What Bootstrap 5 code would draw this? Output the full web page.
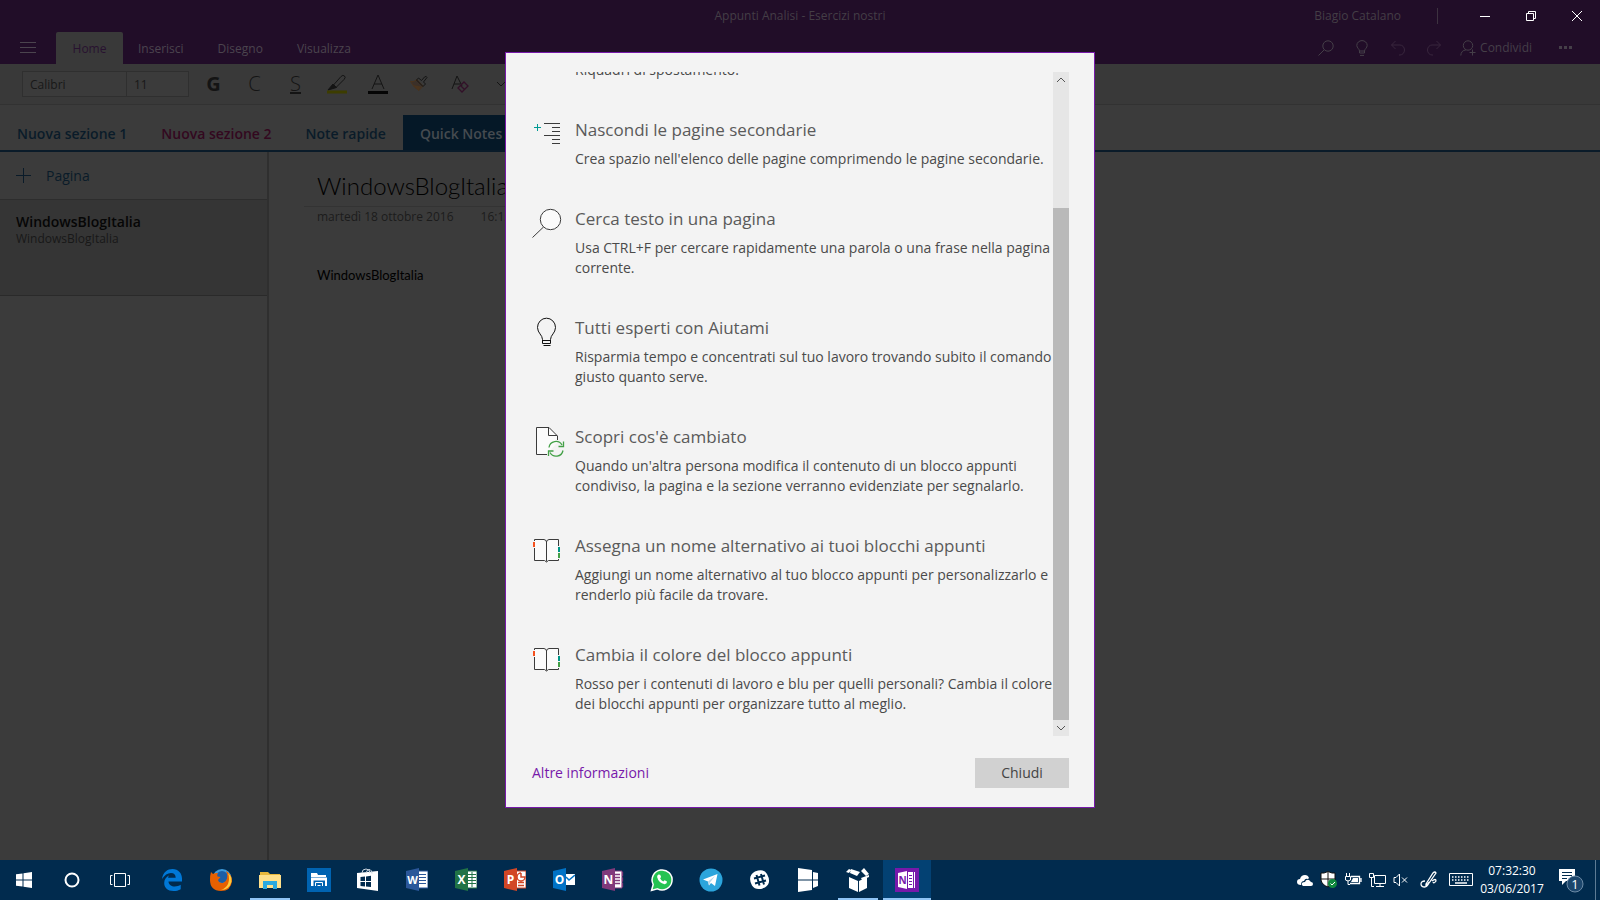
<!DOCTYPE html>
<html lang="it">
<head>
<meta charset="utf-8">
<meta name="viewport" content="width=device-width, initial-scale=1">
<title>Appunti Analisi - Esercizi nostri</title>
<link href="https://cdn.jsdelivr.net/npm/bootstrap@5.3.0/dist/css/bootstrap.min.css" rel="stylesheet">
<style>
  body { font-family: "Open Sans", "Noto Sans", sans-serif; font-size: 12px; line-height: 20px; background: #3b3b3b; color: #111; }
  button { font: inherit; color: inherit; background: none; border: 0; padding: 0; }
  a { text-decoration: none; }
  svg { display: block; flex: none; fill: none; stroke: currentColor; }

  /* Title bar and ribbon tabs */
  .titlebar { height: 32px; background: #210d28; color: #443e46; display: grid; grid-template-columns: 1fr auto 1fr; align-items: center; line-height: 22px; }
  .user-sep { width: 1px; height: 16px; background: #3d3240; margin: 0 24px 0 36px; }
  .win-btn { width: 46px; height: 32px; display: grid; place-items: center; color: #fff; }
  .tabbar { height: 32px; background: #210d28; color: #453f48; }
  .burger { width: 56px; height: 32px; display: grid; place-items: center; color: #4b444e; }
  .rtab { height: 32px; padding: 0 17px; color: #4b444e; line-height: 33px; }
  .rtab.active { width: 67px; padding: 0; text-align: center; background: #393939; color: #281230; border-radius: 2px 2px 0 0; margin-right: -2px; }
  .tool { width: 36px; height: 32px; display: grid; place-items: center; }
  .tool.off { color: #38263d; }
  .ribbon { height: 41px; background: #393939; border-bottom: 1px solid #323232; padding-left: 22px; color: #141414; }
  .fontbox { height: 26px; border: 1px solid #2f2f2f; background: #3b3b3b; color: #181818; font-size: 12px; padding: 0 7px; border-radius: 0; outline: 0; }
  .fontname { width: 105px; }
  .fontsize { width: 63px; margin-left: -1px; }
  .fmt { width: 41px; height: 32px; display: grid; place-items: center; }

  /* Sections */
  .sections { height: 47px; border-bottom: 2px solid #0a1b29; font-size: 14px; font-weight: 600; }
  .section-tab { height: 35px; line-height: 37px; padding: 0 17px; color: #0a1b29; white-space: nowrap; }
  .section-tab.pink { color: #33081f; }
  .section-tab.active { background: #051827; color: #454b50; }

  /* Pages */
  .pages { width: 269px; border-right: 2px solid #2f2f2f; }
  .add-page { height: 48px; padding-left: 16px; gap: 15px; color: #0a1b29; font-size: 14px; border-bottom: 1px solid #2d2d2d; }
  .page-item { height: 96px; padding: 13px 16px; background: #353535; border-bottom: 1px solid #2a2a2a; line-height: 17px; color: #181818; }
  .page-item strong { font-size: 14px; font-weight: 600; color: #060606; display: block; }
  .note { padding: 16px 0 0 35px; font-family: Lato, "Open Sans", sans-serif; color: #000; }
  .note h1 { font-size: 24px; font-weight: 300; line-height: 36px; margin: 0; padding: 0 0 2px 13px; border-bottom: 1px solid #333; }
  .note-date { font-family: "Open Sans", sans-serif; font-size: 12px; padding-left: 13px; color: #1c1c1c; gap: 27px; }
  .note-text { font-size: 13px; margin: 38px 0 0; padding-left: 13px; }

  /* Dialog */
  .veil { position: absolute; inset: 0; display: flex; align-items: center; justify-content: center; }
  .tips { width: 590px; height: 756px; background: #f3f3f3; border: 1px solid #7719aa; padding: 19px 25px 19px 26px; color: #4a4a4a; }
  .tips-view { height: 664px; overflow: hidden; }
  .tips-list { gap: 37px; padding-bottom: 22px; margin: 0; flex: 1; min-width: 0; }
  .tip { display: grid; grid-template-columns: 43px 1fr; }
  .tip h2 { font-size: 17px; font-weight: 400; line-height: 26px; margin: 0 0 6px; color: #5a5a5a; }
  .tip svg { margin-top: 1px; color: #3b3b3b; }
  .tip p { font-size: 14px; line-height: 20px; margin: 0; white-space: nowrap; }
  .sbar { width: 16px; background: #e6e6e6; display: grid; grid-template-rows: 16px 120px 1fr 16px; color: #555; }
  .sbar button { display: grid; place-items: center; }
  .sbar-thumb { background: #b9b9b9; grid-row: 3; }
  .sbar-down { grid-row: 4; }
  .tips-foot { margin-top: 22px; font-size: 14px; }
  .tips-foot a { color: #7719aa; line-height: 22px; }
  .close-btn { width: 94px; height: 30px; background: #d1d1d1; color: #444; }

  /* Taskbar */
  .taskbar { height: 40px; background: #012b4e; color: #fff; }
  .task { width: 48px; height: 40px; display: grid; place-items: center; border-top: 2px solid transparent; border-bottom: 2px solid transparent; }
  .task.app { margin-right: 1px; }
  .task.open { width: 40px; margin: 0 5px 0 4px; border-bottom-color: #8fc4f5; }
  .task.current { background: #034173; border-top-color: #034173; border-bottom-color: #8fc4f5; }
  .pinned { margin-left: 4px; }
  .tray-ico { width: 24px; height: 40px; display: grid; place-items: center; }
  .tray-ico.wide { width: 32px; }
  .clock { width: 70px; line-height: 18px; text-align: center; }
  .notif { width: 49px; height: 40px; display: grid; place-items: center; border-right: 1px solid #5d7b95; margin-right: 4px; }
</style>
</head>
<body>
<div class="d-flex flex-column vh-100 overflow-hidden">
  <div class="flex-grow-1 position-relative d-flex flex-column">
    <header>
      <div class="titlebar">
        <span></span>
        <span>Appunti Analisi - Esercizi nostri</span>
        <div class="d-flex align-items-center justify-content-end">
          <span>Biagio Catalano</span><span class="user-sep"></span>
          <button class="win-btn" aria-label="Riduci a icona"><svg width="12" height="12"><path d="M1 6.500H11"/></svg></button>
          <button class="win-btn" aria-label="Ripristina"><svg width="12" height="12"><path d="M1.500 3.500h7v7h-7zM3.500 3.500v-2h7v7h-2"/></svg></button>
          <button class="win-btn" aria-label="Chiudi finestra"><svg width="12" height="12"><path d="M1 1l10 10M11 1L1 11"/></svg></button>
        </div>
      </div>
      <div class="tabbar d-flex">
        <button class="burger" aria-label="Menu"><svg width="16" height="12"><path d="M0 .5h16M0 5.500h16M0 10.500h16"/></svg></button>
        <nav class="d-flex flex-grow-1">
          <a class="rtab active" href="#">Home</a><a class="rtab" href="#">Inserisci</a><a class="rtab" href="#">Disegno</a><a class="rtab" href="#">Visualizza</a>
        </nav>
        <button class="tool" aria-label="Cerca"><svg width="16" height="16"><circle cx="10" cy="6" r="5.200"/><path d="M6.300 9.700L.5 15.500"/></svg></button>
        <button class="tool" aria-label="Aiutami"><svg width="12" height="16"><path d="M3.500 13v-2C3.500 9 .8 8 .8 5.400a5.200 4.800 0 0 1 10.400 0C11.200 8 8.500 9 8.500 11v2zM3.500 11h5M4 15.400h4"/></svg></button>
        <button class="tool off" aria-label="Annulla"><svg width="16" height="16"><path d="M5.500 1L1.500 5l4 4M1.500 5H10a4.500 5 0 0 1 0 10H9"/></svg></button>
        <button class="tool off" aria-label="Ripeti"><svg width="16" height="16"><path d="M10.500 1l4 4-4 4M14.500 5H6a4.500 5 0 0 0 0 10h1"/></svg></button>
        <button class="d-flex align-items-center gap-1 ms-1 ps-1"><svg width="16" height="16"><circle cx="8" cy="5.500" r="4.700"/><path d="M.8 15.500c0-3 2-5.500 5-5.500M12.500 9.500v6M9.500 12.500h6"/></svg>Condividi</button>
        <button class="tool ms-3 me-3" aria-label="Altro"><svg width="14" height="4"><path d="M0 0h3v3H0zM5 0h3v3H5zM10 0h3v3h-3z" fill="currentColor" stroke="none"/></svg></button>
      </div>
      <div class="ribbon d-flex align-items-center">
        <input class="fontbox fontname" aria-label="Tipo di carattere" value="Calibri"><input class="fontbox fontsize" aria-label="Dimensione" value="11">
        <div class="d-flex ps-1">
          <button class="fmt fs-5 fw-bold" aria-label="Grassetto">G</button>
          <button class="fmt fs-5 fw-light" aria-label="Corsivo">C</button>
          <button class="fmt fs-5 fw-light text-decoration-underline" aria-label="Sottolineato">S</button>
          <button class="fmt" aria-label="Evidenziatore"><svg width="20" height="20"><path d="M6.500 11L14 2.500Q16 .5 17.500 2T17 5.500L9 13.500M6.500 11l2.500 2.500"/><path d="M6 10l3.500 3.500L1 16z" fill="#141414"/><path d="M0 18h20" stroke="#3d3d00" stroke-width="3"/></svg></button>
          <button class="fmt" aria-label="Colore carattere"><svg width="20" height="20"><path d="M4 15L10 1l6 14M6 10h8"/><path d="M0 18.500h20" stroke="#050505" stroke-width="3"/></svg></button>
          <button class="fmt" aria-label="Copia formato"><svg width="20" height="18"><path d="M1.500 6.500Q5 7.500 8 4.500L14 11l-4 4.500Q5 13 1.500 6.500z" fill="#3b3029" stroke="#4a341e"/><path d="M4 10l8 1.500-2.500 4z" fill="#4a341e" stroke="none"/><path d="M7.500 5l2-2 3 2.500L15.500 2q2-1.500 2.500.5L14.500 7l2 2-2.500 2.500z"/></svg></button>
          <button class="fmt" aria-label="Cancella formattazione"><svg width="18" height="18"><path d="M1 14L6 1l5 10M3 9h6"/><path d="M7 13l6-6 4 4-6 6zM9.500 10.500l4 4" stroke="#321028" stroke-width="1.300"/></svg></button>
          <button class="fmt" aria-label="Altri comandi"><svg width="10" height="7"><path d="M1 1l4 4 4-4"/></svg></button>
        </div>
      </div>
      <nav class="sections d-flex align-items-end">
        <a class="section-tab" href="#">Nuova sezione 1</a><a class="section-tab pink" href="#">Nuova sezione 2</a><a class="section-tab" href="#">Note rapide</a><a class="section-tab active" href="#">Quick Notes</a>
      </nav>
    </header>
    <main class="d-flex flex-grow-1">
      <aside class="pages">
        <button class="add-page d-flex align-items-center w-100"><svg width="15" height="15"><path d="M7.500 0v15M0 7.500h15"/></svg>Pagina</button>
        <div class="page-item"><strong>WindowsBlogItalia</strong>WindowsBlogItalia</div>
      </aside>
      <article class="note">
        <h1>WindowsBlogItalia</h1>
        <div class="note-date d-flex"><span>martedì 18 ottobre 2016</span><span>16:15</span></div>
        <p class="note-text">WindowsBlogItalia</p>
      </article>
    </main>

    <div class="veil">
      <section class="tips" role="dialog" aria-label="Novità">
        <div class="tips-view d-flex">
          <div class="tips-list d-flex flex-column justify-content-end">
            <div class="tip"><span></span><div><p>Riquadri di spostamento.</p></div></div>
            <div class="tip">
              <svg width="30" height="30"><path d="M12 5.500h16M20 9.500h8M20 13.500h8M12 17.500h16M20 21.500h8M20 25.500h8"/><path d="M2 9.500h7M5.500 6v7" stroke="#009a93"/></svg>
              <div><h2>Nascondi le pagine secondarie</h2><p>Crea spazio nell'elenco delle pagine comprimendo le pagine secondarie.</p></div>
            </div>
            <div class="tip">
              <svg width="30" height="32"><circle cx="18.500" cy="12.500" r="10.200" fill="#fbfbfb"/><path d="M11.500 20L.5 30.500"/></svg>
              <div><h2>Cerca testo in una pagina</h2><p>Usa CTRL+F per cercare rapidamente una parola o una frase nella pagina<br>corrente.</p></div>
            </div>
            <div class="tip">
              <svg width="30" height="32"><path d="M10.500 27.500v-4C10.500 19 5.500 17 5.500 11.500a9 9.300 0 0 1 18 0C23.500 17 18.500 19 18.500 23.500v4zM10.500 24.500h8M11.500 29.500h7" stroke="#111"/></svg>
              <div><h2>Tutti esperti con Aiutami</h2><p>Risparmia tempo e concentrati sul tuo lavoro trovando subito il comando<br>giusto quanto serve.</p></div>
            </div>
            <div class="tip">
              <svg width="34" height="34"><path d="M4.500 2.500H17L25.500 11V17L15 29.500H4.500z" fill="#fbfbfb" stroke="none"/><path d="M15 29.500H4.500v-27H17L25.500 11v4M16.500 2.500V10.500H25"/><path d="M17 22.500a7 7 0 0 1 13-2.500M31.500 16.500v5h-5M31 25.500a7 7 0 0 1-13 2M16.500 31v-5h5" stroke="#43a047" stroke-width="1.300"/></svg>
              <div><h2>Scopri cos'è cambiato</h2><p>Quando un'altra persona modifica il contenuto di un blocco appunti<br>condiviso, la pagina e la sezione verranno evidenziate per segnalarlo.</p></div>
            </div>
            <div class="tip">
              <svg width="30" height="30" viewBox="0 -1 30 30"><path d="M2.500 4.500H12l2.500 2 2.500-2h9.500v21H17l-2.500 2-2.500-2H2.500z" fill="#fbfbfb" stroke="none"/><path d="M2.500 6V4.500H12Q14.500 5 14.500 7V26.500M14.500 7q0-2 2.500-2.500h9.500V11M2.500 13v12.500h10l2 1.500 2-1.500h10V24"/><path d="M2 7v5" stroke="#f4511e" stroke-width="2"/><path d="M27 12v5" stroke="#009688" stroke-width="2"/><path d="M27 18v5" stroke="#43a047" stroke-width="2"/></svg>
              <div><h2>Assegna un nome alternativo ai tuoi blocchi appunti</h2><p>Aggiungi un nome alternativo al tuo blocco appunti per personalizzarlo e<br>renderlo più facile da trovare.</p></div>
            </div>
            <div class="tip">
              <svg width="30" height="30" viewBox="0 -1 30 30"><path d="M2.500 4.500H12l2.500 2 2.500-2h9.500v21H17l-2.500 2-2.500-2H2.500z" fill="#fbfbfb" stroke="none"/><path d="M2.500 6V4.500H12Q14.500 5 14.500 7V26.500M14.500 7q0-2 2.500-2.500h9.500V11M2.500 13v12.500h10l2 1.500 2-1.500h10V24"/><path d="M2 7v5" stroke="#f4511e" stroke-width="2"/><path d="M27 12v5" stroke="#009688" stroke-width="2"/><path d="M27 18v5" stroke="#43a047" stroke-width="2"/></svg>
              <div><h2>Cambia il colore del blocco appunti</h2><p>Rosso per i contenuti di lavoro e blu per quelli personali? Cambia il colore<br>dei blocchi appunti per organizzare tutto al meglio.</p></div>
            </div>
          </div>
          <div class="sbar">
            <button aria-label="Scorri su"><svg width="10" height="6"><path d="M1 5l4-4 4 4"/></svg></button>
            <div class="sbar-thumb"></div>
            <button class="sbar-down" aria-label="Scorri giù"><svg width="10" height="6"><path d="M1 1l4 4 4-4"/></svg></button>
          </div>
        </div>
        <div class="tips-foot d-flex align-items-center justify-content-between">
          <a href="#">Altre informazioni</a>
          <button class="close-btn">Chiudi</button>
        </div>
      </section>
    </div>
  </div>

  <footer class="taskbar d-flex align-items-center">
    <button class="task" aria-label="Start"><svg width="16" height="16"><path d="M0 2.300L6.500 1.400V7.500H0zM7.500 1.200L16 0v7.500H7.500zM0 8.500h6.500v6.100L0 13.700zM7.500 8.500H16V16l-8.500-1.200z" fill="#fff" stroke="none"/></svg></button>
    <button class="task" aria-label="Cortana"><svg width="16" height="16"><circle cx="8" cy="8" r="6.500" stroke-width="2"/></svg></button>
    <button class="task" aria-label="Visualizzazione attività"><svg width="20" height="14"><path d="M4.500.5h11v13h-11zM2.500 2.500h-2v9h2M17.500 2.500h2v9h-2"/></svg></button>
    <div class="pinned d-flex">
      <button class="task app" aria-label="Edge"><svg width="22" height="22"><path d="M1 10C2 3 6.500 0 11.500 0 17.500 0 21 4.500 21 9.500V12.500H7.500c.2 3.500 3 5 6.200 5 2.300 0 4.300-.7 6-1.700v4.400C17.500 21.500 15 22 12.500 22 6.500 22 3.200 18.500 3.200 14c0-3.500 1.900-6.200 5-7.800-.8.900-1 1.700-1.100 2.600h7.600C14.700 5.500 13 4 10 4 6.500 4 3.500 6 1 10z" fill="#0078d7" stroke="none"/></svg></button>
      <button class="task app" aria-label="Firefox"><svg width="24" height="24"><g stroke="none"><circle cx="13" cy="10.500" r="9.500" fill="#3d9bdc"/><circle cx="13" cy="9" r="6" fill="#1b5ea6"/><path d="M2 4L4 6Q6 4.500 9 5 7.500 7 8.500 8.500L11.500 9 9 12Q10 15.500 14 15q3-1 4-4.500 1-4-1-7.500Q23 6 23 13 22 23 12 23 1 22.500 1 12 1 7 2 4z" fill="#e66000"/><path d="M19 5q4 3 3.500 9Q20 22 12 22q5-2 7-6 2-5 0-11z" fill="#ffcb3c"/></g></svg></button>
      <button class="task open" aria-label="Esplora file"><svg width="22" height="19"><g stroke="none"><path d="M1 1h8l2 2h10v4H1z" fill="#e8b83c"/><path d="M0 4h22v13H0z" fill="#ffe08a"/><path d="M4 10h14v8h-4v-4H8v4H4z" fill="#29a9e0"/></g></svg></button>
      <button class="task app" aria-label="File"><svg width="24" height="24"><path d="M0 0h24v24H0z" fill="#0063b1" stroke="none"/><path d="M4 5h6l1 2h8v2H4zM4 9.500h16V18h-2v-5.500H6.500V18H4z" fill="#fff" stroke="none"/><path d="M8.500 18v-3.500h7V18M10.500 17.500h3" stroke="#fff"/></svg></button>
      <button class="task app" aria-label="Store"><svg width="22" height="24"><path d="M0 5l21-2v20L0 20z" fill="#fff" stroke="none"/><path d="M5 5Q5 1 9 1t4 4M9 5Q10 1 13 1.500q2 1 2 4" stroke="#c9d4df"/><path d="M3.500 9l4.500-.5v4.500H3.500zM9 8.400l5-.6V13H9zM3.500 14H8v4.500L3.500 18zM9 14h5v5l-5-.5z" fill="#012b4e" stroke="none"/></svg></button>
      <button class="task app" aria-label="Word"><svg width="22" height="24"><path d="M12 3h10v17H12z" fill="#fff" stroke="#2b579a"/><path d="M13 6.500h7M13 9.500h7M13 12.500h7M13 15.500h7" stroke="#2b579a"/><path d="M0 3l13-3v23L0 20z" fill="#2b579a" stroke="none"/><text x="6.500" y="16" text-anchor="middle" font-size="11" font-weight="700" fill="#fff" stroke="none">W</text></svg></button>
      <button class="task app" aria-label="Excel"><svg width="22" height="24"><path d="M12 3h10v17H12z" fill="#fff" stroke="#217346"/><path d="M13 6.500h8M13 9.500h8M13 12.500h8M13 15.500h8M17 4v15" stroke="#217346"/><path d="M0 3l13-3v23L0 20z" fill="#217346" stroke="none"/><text x="6.500" y="16" text-anchor="middle" font-size="12" font-weight="700" fill="#fff" stroke="none">X</text></svg></button>
      <button class="task app" aria-label="PowerPoint"><svg width="22" height="24"><path d="M12 3h10v17H12z" fill="#fff" stroke="#d24726"/><path d="M14 14.500h6M14 17.500h6M17 5v4h4a4 4 0 1 1-4-4" stroke="#d24726" stroke-width="1.500"/><path d="M0 3l13-3v23L0 20z" fill="#d24726" stroke="none"/><text x="6.500" y="16" text-anchor="middle" font-size="12" font-weight="700" fill="#fff" stroke="none">P</text></svg></button>
      <button class="task app" aria-label="Outlook"><svg width="22" height="24"><path d="M12 6h10v11H12z" fill="#fff" stroke="none"/><path d="M13 9l3 3 6-5" stroke="#0072c6" stroke-width="1.500"/><path d="M0 3l13-3v23L0 20z" fill="#0072c6" stroke="none"/><text x="6.500" y="16" text-anchor="middle" font-size="12" font-weight="700" fill="#fff" stroke="none">O</text></svg></button>
      <button class="task app" aria-label="OneNote desktop"><svg width="22" height="24"><path d="M12 3h8v17h-8z" fill="#fff" stroke="#80397b"/><path d="M13 6.500h5M13 9.500h5M13 12.500h5M13 15.500h5M20.500 4v4M20.500 9.500v4M20.500 15v4" stroke="#80397b" stroke-width="1.300"/><path d="M0 3l13-3v23L0 20z" fill="#80397b" stroke="none"/><text x="6.500" y="16" text-anchor="middle" font-size="12" font-weight="700" fill="#fff" stroke="none">N</text></svg></button>
      <button class="task app" aria-label="WhatsApp"><svg width="24" height="24"><path d="M1.500 22.500l1.700-6A10 10 0 1 1 7.500 20.800z" fill="#25c352" stroke="#fff" stroke-width="1.500"/><path d="M8.500 6.500l1.700.2.900 2.300-1 1.300q1 2.300 3.200 3.300l1.300-1.300 2.400 1.100q.2 2.300-2.300 2.800Q8.500 15 7.100 9q0-1.700 1.400-2.500z" fill="#fff" stroke="none"/></svg></button>
      <button class="task app" aria-label="Telegram"><svg width="24" height="24"><circle cx="12" cy="12" r="11.500" fill="#2ca5dc" stroke="none"/><path d="M4 11.500L18.500 6 16 18l-4-3-2 2.500-1-4z" fill="#fff" stroke="none"/><path d="M9 13.500L16 8l-5 6.500-1 3z" fill="#b9d6e9" stroke="none"/></svg></button>
      <button class="task app" aria-label="Slack"><svg width="20" height="20"><path d="M5 1.500Q14-2 17 4q5 9-2 13.500-9 4-13-2Q-3 6 5 1.500z" fill="#fff" stroke="none"/><path d="M6.500 5l3 10.500M11 4l3 10.500M4 8.500l11-3M5 13.500l11-3" stroke="#012b4e" stroke-width="2"/></svg></button>
      <button class="task app" aria-label="Windows"><svg width="22" height="24"><path d="M0 0l14 2v9.500H0zM15 4l5 1v6.500h-5zM0 12.500h14V22L0 24zM15 12.500h5V18l-5 2z" fill="#fff" stroke="none"/></svg></button>
      <button class="task open" aria-label="Pacchetti"><svg width="24" height="24"><path d="M3 9l9 4v11l-9-4zM13 13l8-4v11l-8 4zM0 4l3-3 2 1-2 3zM5 1l9 3-3 4-7-3zM15 3l3-3 5 6-3 2zM15 10l8-3v2l-7 3z" fill="#fff" stroke="none"/></svg></button>
      <button class="task current" aria-label="OneNote"><svg width="24" height="24"><path d="M0 0h24v24H0z" fill="#7719aa" stroke="none"/><path d="M3 5l9-2v18l-9-2zM13 4h7v16h-7z" fill="#fff" stroke="none"/><path d="M14 7.500h3M14 10.500h3M14 13.500h3M14 16.500h3M18.500 4v16" stroke="#7719aa"/><text x="7.500" y="16" text-anchor="middle" font-size="10" font-weight="700" fill="#7719aa" stroke="none">N</text></svg></button>
    </div>

    <div class="d-flex align-items-center ms-auto">
      <span class="tray-ico"><svg width="16" height="12"><path d="M4 11Q0 11 0 8t3-3Q4 1 8 1q3 0 4 3l-1 1Q8 4 7 7q-3 0-3 4zM6 12q-2-1-1-3 1-1 3-1 1-3 4-2l2 2q2 0 2 2t-2 2z" fill="#fff" stroke="none"/></svg></span>
      <span class="tray-ico"><svg width="18" height="18"><path d="M1 2l3 0 4-1.500L12 2h3v7q-2 5-7 7Q2 14 1 9z" fill="#fff" stroke="#111"/><path d="M8 1v15M1 8h14" stroke="#111"/><circle cx="12.500" cy="12.500" r="4.500" fill="#10893e" stroke="none"/><path d="M10.500 12.500l1.500 1.500 3-3" stroke="#fff"/></svg></span>
      <span class="tray-ico"><svg width="18" height="14"><path d="M7 3.500h8.500v7H6M17 5v4" stroke-width="1.300"/><path d="M9 5h5v4H7z" fill="#fff" stroke="none"/><path d="M1.500 3.500h5V7q-2.500 2-5 0zM2.500 0v3M5.500 0v3M4 8v3.500h2"/></svg></span>
      <span class="tray-ico"><svg width="17" height="15"><path d="M5.500 2.500h11v8h-11zM11 11v2.500M7 13.500h8M.5.500h4v4h-4zM2.500 5v8.500H5"/></svg></span>
      <span class="tray-ico"><svg width="16" height="14"><path d="M1 4.500h2L6.500 1v12L3 9.500H1zM9 4.500l5 5M14 4.500l-5 5"/></svg></span>
      <span class="tray-ico wide"><svg width="18" height="18"><path d="M5 10Q1 10 1 13t4 3q3-1 4-5M6 13L13 2q2-2 3 0L9 12l-3 2zM12 10q4-3 4 0-2 3-3 1" stroke-width="1.300"/></svg></span>
      <span class="tray-ico wide"><svg width="24" height="14"><path d="M.5.500h23v12H.5z"/><path d="M3 4h18M3 7h18" stroke-width="1.500" stroke-dasharray="1.500 1.500"/><path d="M6 10h12" stroke-width="1.500"/></svg></span>
      <div class="clock">07:32:30<br>03/06/2017</div>
      <button class="notif" aria-label="Notifiche"><svg width="26" height="26"><path d="M1 2h16v12H8l-4 4v-4H1z" fill="#fff" stroke="none"/><path d="M4 5.500h10M4 8.500h10M4 11.500h5" stroke="#012b4e"/><circle cx="17" cy="17" r="8" fill="#1c466c" stroke="#6d8ba6"/><text x="17" y="22" text-anchor="middle" font-size="13" fill="#fff" stroke="none">1</text></svg></button>
    </div>
  </footer>
</div>
<script src="https://cdn.jsdelivr.net/npm/bootstrap@5.3.0/dist/js/bootstrap.bundle.min.js"></script>
</body>
</html>
